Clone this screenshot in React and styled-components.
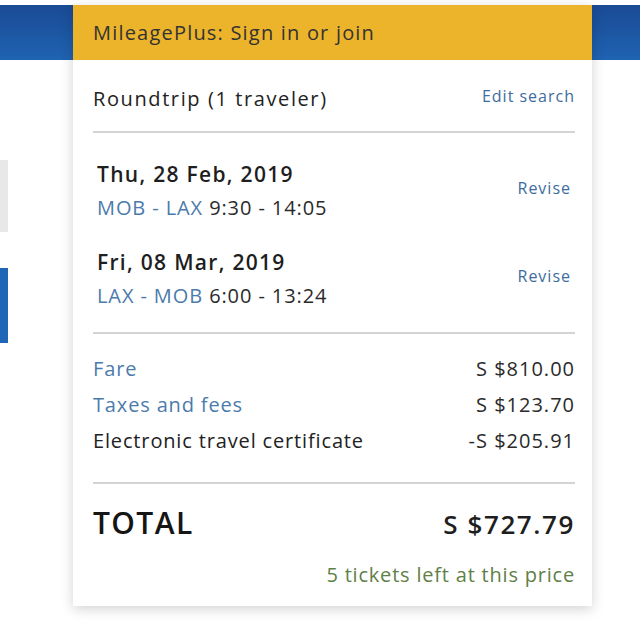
import styled, { createGlobalStyle } from 'styled-components'

const GlobalStyle = createGlobalStyle`
    html, body {
        margin: 0;
        padding: 0;
        background: #ffffff;
    }
    body {
        font-family: "Open Sans", "Noto Sans", "Liberation Sans", sans-serif;
        color: #222;
    }
`;

const Page = styled.div`
    display: flex;
    align-items: flex-start;
    height: 640px;
    padding-top: 5px;
    box-sizing: border-box;
    overflow: hidden;
    background: linear-gradient(180deg, #1a4a95 0%, #1f63b2 100%) 0 5px / 100% 55px no-repeat, #fff;
`;

const Rail = styled.div`
    width: 8px;
    display: flex;
    flex-direction: column;
    gap: 36px;
    padding-top: 155px;
`;

const RailTab = styled.div`
    height: ${p => p.$h}px;
    background: ${p => p.$color};
`;

const Card = styled.div`
    margin-left: 65px;
    width: 519px;
    height: 601px;
    background: #fff;
    box-shadow: 0 3px 12px rgba(0, 0, 0, 0.18);
    display: flex;
    flex-direction: column;
    letter-spacing: 1px;
`;

const Header = styled.div`
    height: 55px;
    display: flex;
    align-items: center;
    padding: 0 20px;
    background: #ecb42b;
    color: #333;
    font-size: 20px;
    letter-spacing: 1.2px;
`;

const Body = styled.div`
    padding: 0 17px 0 20px;
`;

const Section = styled.div`
    padding: ${p => p.$pad};
    border-bottom: ${p => (p.$last ? 'none' : '2px solid #d4d4d4')};
`;

const Row = styled.div`
    display: flex;
    justify-content: space-between;
    align-items: ${p => p.$align || 'baseline'};
`;

const Title = styled.div`
    font-size: 20px;
    line-height: 26px;
    letter-spacing: 1.6px;
    color: #222;
`;

const Link = styled.a`
    font-size: 16px;
    color: #3e6c9c;
    text-decoration: none;
    cursor: pointer;
    margin-top: ${p => p.$top || 0}px;
    margin-bottom: ${p => p.$bottom || 0}px;
`;

const Flight = styled.div`
    display: flex;
    justify-content: space-between;
    align-items: center;
    padding: 0 4px;
    & + & {
        margin-top: 22px;
    }
`;

const FlightDate = styled.div`
    font-size: 21px;
    font-weight: 600;
    line-height: 33px;
    letter-spacing: 1.3px;
    color: #1e1e1e;
`;

const FlightRoute = styled.div`
    font-size: 20px;
    line-height: 33px;
    letter-spacing: 0.9px;
    color: #2a2a2a;
`;

const Airports = styled.span`
    color: #4b7bac;
`;

const PriceRow = styled(Row)`
    font-size: 20px;
    line-height: 36px;
    letter-spacing: 0.85px;
    color: ${p => (p.$link ? '#4b7bac' : '#222')};
`;

const Amount = styled.span`
    color: #2a2a2a;
    letter-spacing: 1px;
`;

const TotalLabel = styled.div`
    font-size: 30px;
    font-weight: 600;
    letter-spacing: 1.4px;
    color: #151515;
`;

const TotalAmount = styled.div`
    font-size: 26px;
    font-weight: 600;
    letter-spacing: 1.6px;
    color: #1e1e1e;
`;

const Stock = styled.div`
    text-align: right;
    font-size: 20px;
    letter-spacing: 0.8px;
    color: #5f8047;
    margin-top: 18px;
`;

function App() {
    return (
        <Page>
            <GlobalStyle />
            <Rail>
                <RailTab $h={72} $color="#e8e8e8" />
                <RailTab $h={75} $color="#1f67b6" />
            </Rail>
            <Card>
                <Header>MileagePlus: Sign in or join</Header>
                <Body>
                    <Section $pad="26px 0 19px">
                        <Row $align="flex-start">
                            <Title>Roundtrip (1 traveler)</Title>
                            <Link $top={-1}>Edit search</Link>
                        </Row>
                    </Section>
                    <Section $pad="25px 0 20px">
                        <Flight>
                            <div>
                                <FlightDate>Thu, 28 Feb, 2019</FlightDate>
                                <FlightRoute><Airports>MOB - LAX</Airports> 9:30 - 14:05</FlightRoute>
                            </div>
                            <Link $bottom={6}>Revise</Link>
                        </Flight>
                        <Flight>
                            <div>
                                <FlightDate>Fri, 08 Mar, 2019</FlightDate>
                                <FlightRoute><Airports>LAX - MOB</Airports> 6:00 - 13:24</FlightRoute>
                            </div>
                            <Link $bottom={6}>Revise</Link>
                        </Flight>
                    </Section>
                    <Section $pad="17px 0 23px">
                        <PriceRow $link>
                            <span>Fare</span>
                            <Amount>S $810.00</Amount>
                        </PriceRow>
                        <PriceRow $link>
                            <span>Taxes and fees</span>
                            <Amount>S $123.70</Amount>
                        </PriceRow>
                        <PriceRow>
                            <span>Electronic travel certificate</span>
                            <Amount>-S $205.91</Amount>
                        </PriceRow>
                    </Section>
                    <Section $pad="18px 0 0" $last>
                        <Row>
                            <TotalLabel>TOTAL</TotalLabel>
                            <TotalAmount>S $727.79</TotalAmount>
                        </Row>
                        <Stock>5 tickets left at this price</Stock>
                    </Section>
                </Body>
            </Card>
        </Page>
    )
}

export default App;
